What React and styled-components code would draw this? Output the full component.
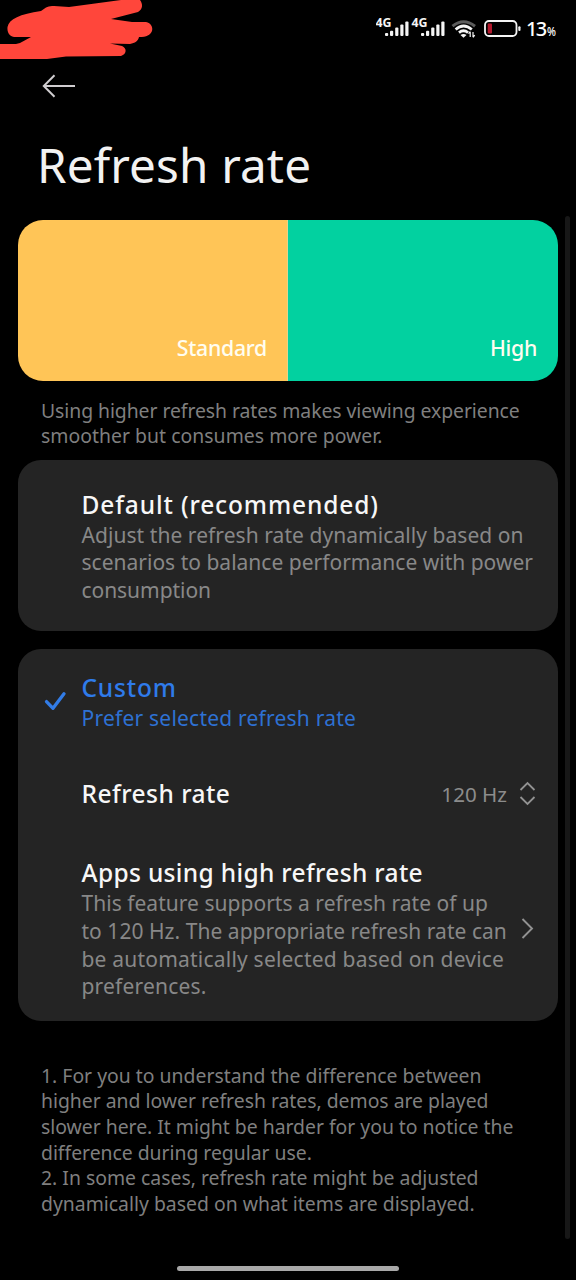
import React from "react";
import styled, { createGlobalStyle } from "styled-components";

const GlobalStyle = createGlobalStyle`
  * { box-sizing: border-box; }
  body { margin: 0; background: #000; }
`;

const Screen = styled.div`
  position: relative;
  width: 576px;
  height: 1280px;
  overflow: hidden;
  background: #000;
  color: #f2f2f2;
  font-family: "Noto Sans", sans-serif;
`;

const StatusBar = styled.header`
  display: flex;
  justify-content: flex-end;
  height: 56px;
  padding: 14px 20px 0 0;
`;

const StatusIcons = styled.svg`
  display: block;
  width: 150px;
  height: 28px;
`;

const BatteryLevel = styled.div`
  display: flex;
  align-items: baseline;
  width: 30px;
  height: 28px;
  color: #fff;
  font-size: 20px;
  font-weight: 500;
  line-height: 30px;
  letter-spacing: -1.6px;
`;

const Percent = styled.span`
  margin-left: 1px;
  font-size: 12.5px;
  letter-spacing: 0;
  transform: scaleX(0.84);
  transform-origin: left;
`;

const Scribble = styled.svg`
  position: absolute;
  left: 0;
  top: 0;
`;

const BackButton = styled.button`
  display: flex;
  width: 40px;
  height: 28px;
  margin: 16px 0 0 39px;
  padding: 0;
  border: 0;
  background: none;
`;

const Title = styled.h1`
  margin: 35px 0 0 37px;
  font-size: 47.6px;
  font-weight: 400;
  line-height: 60px;
  letter-spacing: 0.15px;
`;

const Content = styled.main`
  padding: 25px 18px 0;
`;

const Preview = styled.section`
  display: flex;
  height: 161px;
  border-radius: 25px;
  overflow: hidden;
`;

const PreviewPane = styled.div`
  display: flex;
  flex: 1 1 0;
  align-items: flex-end;
  justify-content: flex-end;
  padding: 0 ${(p) => (p.$divided ? 20 : 21)}px 17px 0;
  background: ${(p) => p.$color};
  border-right: ${(p) => (p.$divided ? "1px solid #e6d48a" : "0")};
  color: #fffdf0;
  font-size: 21.3px;
  font-weight: 500;
  line-height: 32px;
  letter-spacing: -0.3px;
`;

const Note = styled.div`
  margin: ${(p) => p.$top}px 0 0 23px;
  color: #7f7f7f;
  font-size: 19.4px;
  line-height: ${(p) => p.$line}px;
  white-space: nowrap;
`;

const Line = styled.div`
  letter-spacing: ${(p) => p.$spacing || 0}px;
`;

const Card = styled.section`
  display: flex;
  flex-direction: column;
  height: ${(p) => p.$height}px;
  margin-top: ${(p) => p.$top}px;
  padding-top: ${(p) => p.$pad}px;
  border-radius: 23px;
  background: #242424;
`;

const Option = styled.div`
  display: flex;
  align-items: center;
  margin-top: ${(p) => p.$top || 0}px;
  padding-right: 21px;
`;

const Marker = styled.div`
  flex: none;
  width: 63.5px;
  height: 24px;
  padding-left: 26px;
`;

const OptionText = styled.div`
  flex: 1;
  white-space: nowrap;
`;

const OptionTitle = styled.div`
  color: ${(p) => (p.$active ? "#2f7bea" : "#f7f7f7")};
  font-size: 24.5px;
  font-weight: 500;
  line-height: 32px;
  letter-spacing: ${(p) => p.$spacing}px;
`;

const OptionSummary = styled.div`
  padding-top: 1px;
  color: ${(p) => (p.$active ? "#2e71d3" : "#888")};
  font-size: 21px;
  line-height: 27.8px;
`;

const Value = styled.span`
  margin-right: 11px;
  color: #8c8c8c;
  font-size: 20.6px;
`;

const Scrollbar = styled.div`
  position: absolute;
  right: 6px;
  top: 216px;
  width: 5px;
  height: 1023px;
  border-radius: 3px;
  background: #171717;
`;

const HomeIndicator = styled.div`
  position: absolute;
  left: 177px;
  bottom: 9px;
  width: 222px;
  height: 5px;
  border-radius: 3px;
  background: #a8a8a8;
`;

const Lines = ({ items }) =>
  items.map(([text, spacing]) => (
    <Line key={text} $spacing={spacing}>
      {text}
    </Line>
  ));

const Signal = ({ x }) => (
  <g transform={`translate(${x} 0)`} fill="#f5f5f5">
    <text x="-0.5" y="13.300" fontSize="11.5" fontWeight="700" fontFamily="Noto Sans, sans-serif" textLength="16" lengthAdjust="spacingAndGlyphs">
      4G
    </text>
    <rect x="9" y="19" width="3.2" height="3" rx="1" />
    <rect x="14" y="16.8" width="3.2" height="5.2" rx="1" />
    <rect x="19.2" y="13.5" width="3.2" height="8.5" rx="1" />
    <rect x="24.3" y="10.5" width="3.2" height="11.5" rx="1" />
    <rect x="29.3" y="7.5" width="3.2" height="14.5" rx="1" />
  </g>
);

export default function App() {
  return (
    <Screen>
      <GlobalStyle />
      <StatusBar>
        <StatusIcons viewBox="0 0 150 28">
          <Signal x={0} />
          <Signal x={36} />
          <g fill="none" strokeWidth="3">
            <path d="M76.5 12.2Q87.5 3.2 99 12.2" stroke="#5c5c5c" />
            <path d="M79.6 15.5Q87.5 8.6 95.8 15.5" stroke="#f5f5f5" strokeWidth="2.8" />
            <path d="M83 18.6Q87.5 15 92 18.6" stroke="#f5f5f5" strokeWidth="2.8" />
          </g>
          <path d="M84.5 21Q87.5 19 90.5 21L87.5 23.700Z" fill="#f5f5f5" />
          <path d="M94.2 23v-5.2M94.2 17.5l-1.7 2.2M97 18v5M97 23.3l1.7-2.2" stroke="#f5f5f5" strokeWidth="1.2" />
          <rect x="109" y="7" width="31.5" height="15" rx="4" fill="none" stroke="#f5f5f5" strokeWidth="1.8" />
          <rect x="111.7" y="9.6" width="4.3" height="9.8" rx="1" fill="#b3182c" />
          <rect x="142.3" y="12.3" width="2.2" height="4.6" rx="1" fill="#f5f5f5" />
        </StatusIcons>
        <BatteryLevel>
          13<Percent>%</Percent>
        </BatteryLevel>
      </StatusBar>
      <Scribble width="160" height="64" viewBox="0 0 160 64">
        <path
          d="M0 44H16L20 43L31 37H14C9 36 7 32 7.500 27C9 19 20 14 41 11L46 7.500Q49 5.500 54 6L69 7L121 0H140C143 4 143 9 138 12L111 19L132 22H146C151 23 153 27 152 31C150 35 147 37 139 37C138 41 135 43 130 44L110 43.500L122 46C127 48 127 54 121 56L66 56.500L47 59H0Z"
          fill="#ff463b"
        />
      </Scribble>
      <BackButton aria-label="Back">
        <svg width="40" height="28" viewBox="0 0 40 28" fill="none" stroke="#d0cdd0" strokeWidth="2">
          <path d="M36 14H4.800M15.500 3.200L4.800 14L15.500 24.800" />
        </svg>
      </BackButton>
      <Title>Refresh rate</Title>
      <Content>
        <Preview>
          <PreviewPane $color="#ffc557" $divided>Standard</PreviewPane>
          <PreviewPane $color="#02d1a0">High</PreviewPane>
        </Preview>
        <Note $top={16.5} $line={25.7}>
          <Lines
            items={[
              ["Using higher refresh rates makes viewing experience", -0.07],
              ["smoother but consumes more power.", 0.03],
            ]}
          />
        </Note>
        <Card $height={171} $top={11.1} $pad={28.5}>
          <Option>
            <Marker />
            <OptionText>
              <OptionTitle $spacing={0.87}>Default (recommended)</OptionTitle>
              <OptionSummary>
                <Lines
                  items={[
                    ["Adjust the refresh rate dynamically based on", 0.06],
                    ["scenarios to balance performance with power", 0.01],
                    ["consumption", -0.05],
                  ]}
                />
              </OptionSummary>
            </OptionText>
          </Option>
        </Card>
        <Card $height={372} $top={18} $pad={22.5}>
          <Option>
            <Marker>
              <svg width="24" height="24" viewBox="0 0 24 24" fill="none" stroke="#327ce6" strokeWidth="3.3" strokeLinecap="round" strokeLinejoin="round">
                <path d="M2.500 11.600L9 18.300L20 3.800" />
              </svg>
            </Marker>
            <OptionText>
              <OptionTitle $active $spacing={0.8}>Custom</OptionTitle>
              <OptionSummary $active>
                <Lines items={[["Prefer selected refresh rate", 0.22]]} />
              </OptionSummary>
            </OptionText>
          </Option>
          <Option $top={45.700}>
            <Marker />
            <OptionText>
              <OptionTitle $spacing={0.47}>Refresh rate</OptionTitle>
            </OptionText>
            <Value>120 Hz</Value>
            <svg width="19" height="26" viewBox="0 0 19 26" fill="none" stroke="#929292" strokeWidth="1.800">
              <path d="M2.500 9L9.500 2L16.500 9M2.500 16L9.500 23L16.500 16" />
            </svg>
          </Option>
          <Option $top={47}>
            <Marker />
            <OptionText>
              <OptionTitle $spacing={0.34}>Apps using high refresh rate</OptionTitle>
              <OptionSummary>
                <Lines
                  items={[
                    ["This feature supports a refresh rate of up", 0.03],
                    ["to 120 Hz. The appropriate refresh rate can", 0.04],
                    ["be automatically selected based on device", 0.21],
                    ["preferences.", 0.2],
                  ]}
                />
              </OptionSummary>
            </OptionText>
            <svg width="19" height="26" viewBox="0 0 19 26" fill="none" stroke="#929292" strokeWidth="1.900">
              <path d="M4.500 3L14 12.500L4.500 22" />
            </svg>
          </Option>
        </Card>
        <Note $top={41.900} $line={25.6}>
          <Lines
            items={[
              ["1. For you to understand the difference between", 0],
              ["higher and lower refresh rates, demos are played", -0.02],
              ["slower here. It might be harder for you to notice the", -0.02],
              ["difference during regular use.", -0.03],
              ["2. In some cases, refresh rate might be adjusted", 0],
              ["dynamically based on what items are displayed.", 0],
            ]}
          />
        </Note>
      </Content>
      <Scrollbar />
      <HomeIndicator />
    </Screen>
  );
}
